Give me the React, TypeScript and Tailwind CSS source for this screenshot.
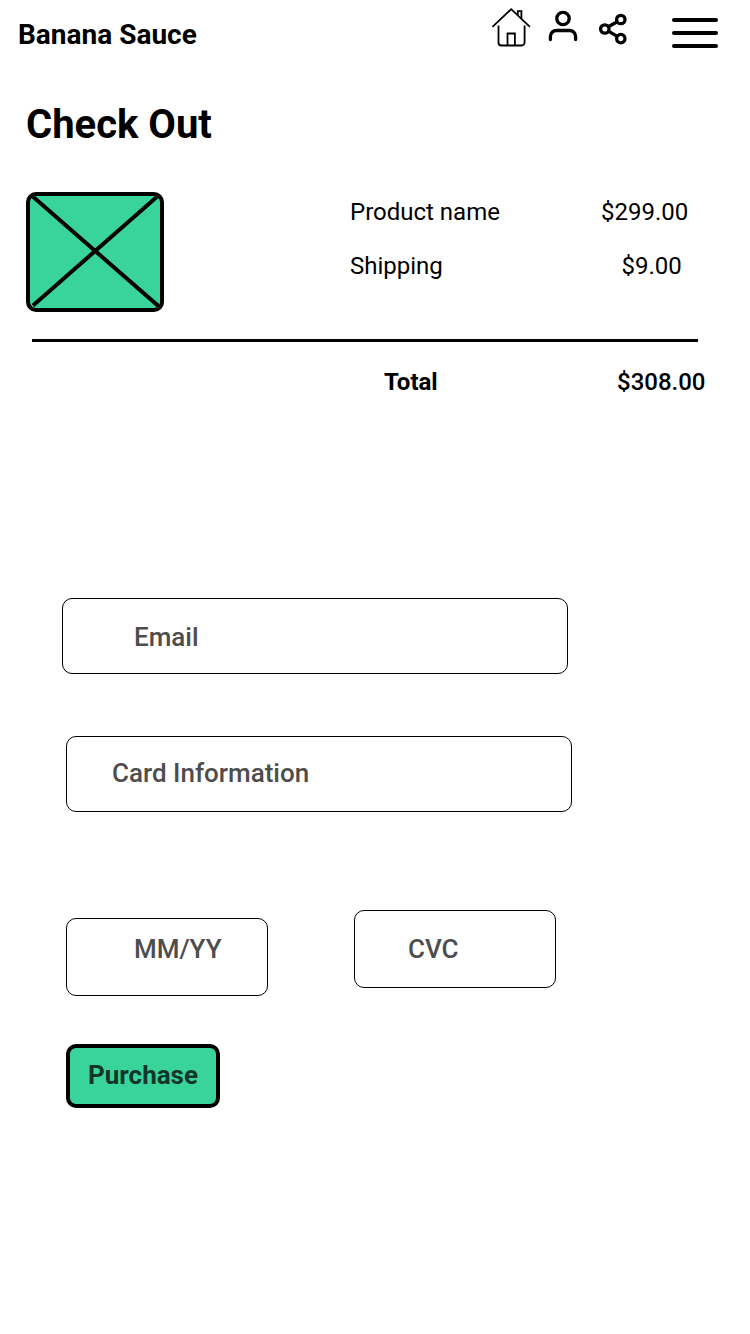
import React from "react";

function HomeIcon() {
  return (
    <svg className="h-10 w-10" viewBox="0 0 40 40" fill="none" stroke="#000" strokeWidth="1.8" aria-label="Home">
      <path d="M2 19.4 20.2 2.2 38.4 19.4" strokeLinecap="round" />
      <path d="M26.8 8V4.200h3.600v7.200" />
      <path d="M7.500 18.500v17a3 3 0 0 0 3 3h20.100a3 3 0 0 0 3-3v-17" />
      <path d="M16.500 38.500V26.500h7.400v12" />
    </svg>
  );
}

function UserIcon() {
  return (
    <svg className="h-8 w-7 overflow-visible" viewBox="0 0 28 32" fill="none" stroke="#000" strokeWidth="3.3" aria-label="Account">
      <circle cx="14" cy="8.500" r="6.200" />
      <path d="M1.400 29.500v-3a6 6 0 0 1 6-6h13.200a6 6 0 0 1 6 6v3" strokeLinecap="round" />
    </svg>
  );
}

function ShareIcon() {
  return (
    <svg className="h-8 w-7" viewBox="0 0 28 32" fill="none" stroke="#000" strokeWidth="3.3" aria-label="Share">
      <circle cx="5.800" cy="16" r="4.200" />
      <circle cx="21.800" cy="6.500" r="4.200" />
      <circle cx="21.800" cy="25.600" r="4.200" />
      <path d="m9.400 13.800 8.800-5.100M9.400 18.200l8.800 5.200" />
    </svg>
  );
}

function MenuIcon() {
  return (
    <div className="flex w-[46px] flex-col gap-[9px]">
      <span className="h-1 rounded-sm bg-black" />
      <span className="h-1 rounded-sm bg-black" />
      <span className="h-1 rounded-sm bg-black" />
    </div>
  );
}

function ProductPicture() {
  return (
    <div className="h-[120px] w-[138px] overflow-hidden rounded-[10px] border-4 border-black bg-[#39d49c]">
      <svg className="h-full w-full overflow-visible" viewBox="0 0 130 112" stroke="#000" strokeWidth="4">
        <path d="M1 -1 130 111.500M3 109.500 129 -1" />
      </svg>
    </div>
  );
}

export default function App() {
  return (
    <div className="h-[1334px] w-[750px] bg-white font-['Roboto',sans-serif] text-2xl leading-8 text-black">
      <header className="flex h-[60px] items-start pl-[18px]">
        <div className="mt-[19px] w-[473px] text-[28px] leading-8 font-bold">Banana Sauce</div>
        <div className="mt-[7px]"><HomeIcon /></div>
        <div className="mt-[10px] ml-[18px]"><UserIcon /></div>
        <div className="mt-[13px] ml-[22px]"><ShareIcon /></div>
        <div className="mt-[18px] ml-[45px]"><MenuIcon /></div>
      </header>

      <main>
        <h1 className="mt-[41px] ml-[26px] text-[40px] leading-[48px] font-bold">Check Out</h1>

        <section className="mt-[43px] flex pl-[26px]">
          <ProductPicture />
          <div className="mt-1 ml-[186px] flex flex-col gap-[22px]">
            <div className="flex">
              <span className="w-[251px]">Product name</span>
              <span>$299.00</span>
            </div>
            <div className="flex">
              <span className="w-[271.500px]">Shipping</span>
              <span>$9.00</span>
            </div>
          </div>
        </section>

        <div className="mt-[27px] ml-8 h-[3px] w-[666px] bg-black" />
        <div className="mt-6 flex pl-96">
          <span className="w-[233px] font-bold">Total</span>
          <span className="font-medium">$308.00</span>
        </div>

        <form className="mt-50 flex flex-col text-[26px] font-medium text-[#4d4d4d]">
          <div className="ml-[62px] h-[76px] w-[506px] rounded-[10px] border border-black pt-[22px] pl-[71px]">Email</div>
          <div className="mt-[62px] ml-[66px] h-[76px] w-[506px] rounded-[10px] border border-black pt-5 pl-[45px]">
            Card Information
          </div>
          <div className="mt-[98px] ml-[66px] flex items-start">
            <div className="mt-2 h-[78px] w-[202px] rounded-[10px] border border-black pt-[14px] pl-[67px]">MM/YY</div>
            <div className="ml-[86px] h-[78px] w-[202px] rounded-[10px] border border-black pt-[22px] pl-[53px]">CVC</div>
          </div>
          <button
            type="button"
            className="mt-12 ml-[66px] flex h-16 w-[154px] rounded-[10px] border-4 border-black bg-[#39d49c] pt-[11px] pl-[18px] font-bold text-[#12352a]"
          >
            Purchase
          </button>
        </form>
      </main>
    </div>
  );
}
